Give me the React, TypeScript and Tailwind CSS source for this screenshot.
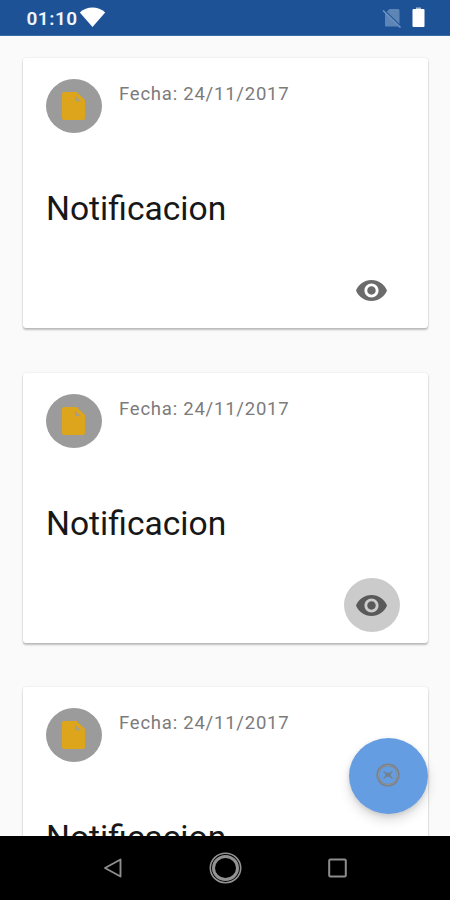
const stack = "font-['Roboto','Noto_Sans',sans-serif]";

function StatusBar() {
  return (
    <header className="flex h-9 shrink-0 items-start justify-between border-b border-[#3a6ca6] bg-[#1d5396] pr-[25px] pl-[26.500px]">
      <div className="flex items-start">
        <span className="w-[52.500px] pt-2 text-[19px] leading-[21px] font-semibold tracking-[0.500px] whitespace-nowrap text-[#f1f5fa]">
          01:10
        </span>
        <svg className="mt-[7px] h-5 w-[27px]" viewBox="0 0 27 20" fill="#fff">
          <path d="M.8 5.400C8-1 19-1 26.200 5.400L13.500 20Z" />
        </svg>
      </div>
      <div className="flex items-start">
        <svg className="mt-2 mr-2.5 h-5 w-[20px]" viewBox="0 0 20 20">
          <path d="M7.500 1H16q1.500 0 1.500 1.500V16L4.800 3.700ZM3 4V17.500q0 1 1 1H16.500Z" fill="#5d86b7" />
          <path d="M1 2.500L18.500 19.500" stroke="#6c93c0" strokeWidth="1.700" />
        </svg>
        <svg className="mt-[7px] h-5 w-[13px]" viewBox="0 0 13 20">
          <path d="M4 0.500h5V3H4Z" fill="#a9c0da" />
          <rect x="0.500" y="2" width="12" height="18" rx="1" fill="#fff" />
        </svg>
      </div>
    </header>
  );
}

function EyeButton({ pressed }: { pressed: boolean }) {
  return (
    <button
      aria-label="Ver"
      className={`mr-[28.500px] flex h-[54px] w-14 items-center justify-center self-end rounded-[50%] ${
        pressed ? "bg-[#cbcbcb]" : ""
      }`}
    >
      <svg
        className={`h-[21px] w-[31px] ${pressed ? "fill-[#595959]" : "fill-[#6b6b6b]"}`}
        viewBox="1 4.500 22 15"
        preserveAspectRatio="none"
      >
        <path d="M12 4.500C7 4.500 2.730 7.610 1 12c1.730 4.390 6 7.500 11 7.500s9.270-3.110 11-7.500c-1.730-4.390-6-7.500-11-7.500zM12 17c-2.760 0-5-2.240-5-5s2.240-5 5-5 5 2.240 5 5-2.240 5-5 5zm0-8c-1.660 0-3 1.340-3 3s1.340 3 3 3 3-1.340 3-3-1.340-3-3-3z" />
      </svg>
    </button>
  );
}

function Card({ pressed = false }: { pressed?: boolean }) {
  return (
    <article className="flex h-[270px] shrink-0 flex-col rounded-[3px] bg-white shadow-[0_2px_2px_rgba(0,0,0,0.24),0_0_2px_rgba(0,0,0,0.12)]">
      <div className="flex items-start pt-[21px] pl-[22.500px]">
        <div className="flex h-[54px] w-14 items-center justify-center rounded-[50%] bg-[#9b9b9b]">
          <svg className="h-7 w-[23px]" viewBox="0 0 23 28">
            <path d="M2 0H14.500L23 8V26Q23 28 21 28H2Q0 28 0 26V2Q0 0 2 0Z" fill="#dca51c" />
            <path d="M13 3.500V7.500Q13 9.300 14.800 9.300H19Z" fill="#a79f87" />
          </svg>
        </div>
        <p className="mt-[4px] ml-[17.500px] text-[18.500px] leading-[22px] tracking-[0.770px] whitespace-nowrap text-[#7b7b7b]">
          Fecha: 24/11/2017
        </p>
      </div>
      <h2 className="mt-[56px] ml-[22.500px] origin-left scale-x-[1.018] text-[33px] leading-10 whitespace-nowrap text-[#171717]">
        Notificacion
      </h2>
      <div className="mt-[34.500px] flex flex-col">
        <EyeButton pressed={pressed} />
      </div>
    </article>
  );
}

function Fab() {
  return (
    <button
      aria-label="Acciones"
      className="absolute top-[738px] left-[349px] flex h-[76px] w-[79px] items-center justify-center rounded-[50%] bg-[#659de2] shadow-[0_6px_12px_rgba(0,0,0,0.14),0_2px_4px_rgba(0,0,0,0.1)]"
    >
      <svg className="mr-px mb-0.5 h-6 w-6" viewBox="0 0 24 24" fill="none">
        <circle cx="12" cy="12" r="10.200" stroke="#7b8289" strokeWidth="2.800" />
        <circle cx="12" cy="12" r="9.600" stroke="#929aa0" strokeWidth="0.800" />
        <path d="M7.500 8.500L10.500 10.500H13.500L16.500 8.500M7.500 15.500L10.500 13H13.500L16.500 15.500M9 11.700H15" stroke="#74808c" strokeWidth="1.500" />
      </svg>
    </button>
  );
}

function NavigationBar() {
  return (
    <nav className="flex h-[64.500px] shrink-0 items-center justify-between bg-black pr-[103px] pl-[103px]">
      <svg className="h-5 w-[19px]" viewBox="0 0 19 20" fill="none">
        <path d="M17.500 1.500V18.500L2 10Z" stroke="#8e8e8e" strokeWidth="1.900" strokeLinejoin="round" />
      </svg>
      <svg className="h-8 w-[33px]" viewBox="0 0 33 32" fill="none" stroke="#929292">
        <ellipse cx="16.500" cy="16" rx="15.200" ry="14.700" strokeWidth="1.600" />
        <ellipse cx="16.500" cy="16" rx="12" ry="11.600" strokeWidth="3" />
      </svg>
      <svg className="h-5 w-[19px]" viewBox="0 0 19 20" fill="none">
        <rect x="1.200" y="1.500" width="16.600" height="17" rx="1.200" stroke="#8e8e8e" strokeWidth="2" />
      </svg>
    </nav>
  );
}

export default function App() {
  return (
    <div className={`relative flex h-[900px] w-[450px] flex-col overflow-hidden bg-[#fafafa] ${stack}`}>
      <StatusBar />
      <main className="flex min-h-0 flex-1 flex-col gap-[44.500px] overflow-hidden pt-[22px] pr-[22px] pl-[23px]">
        <Card />
        <Card pressed />
        <Card />
      </main>
      <NavigationBar />
      <Fab />
    </div>
  );
}
